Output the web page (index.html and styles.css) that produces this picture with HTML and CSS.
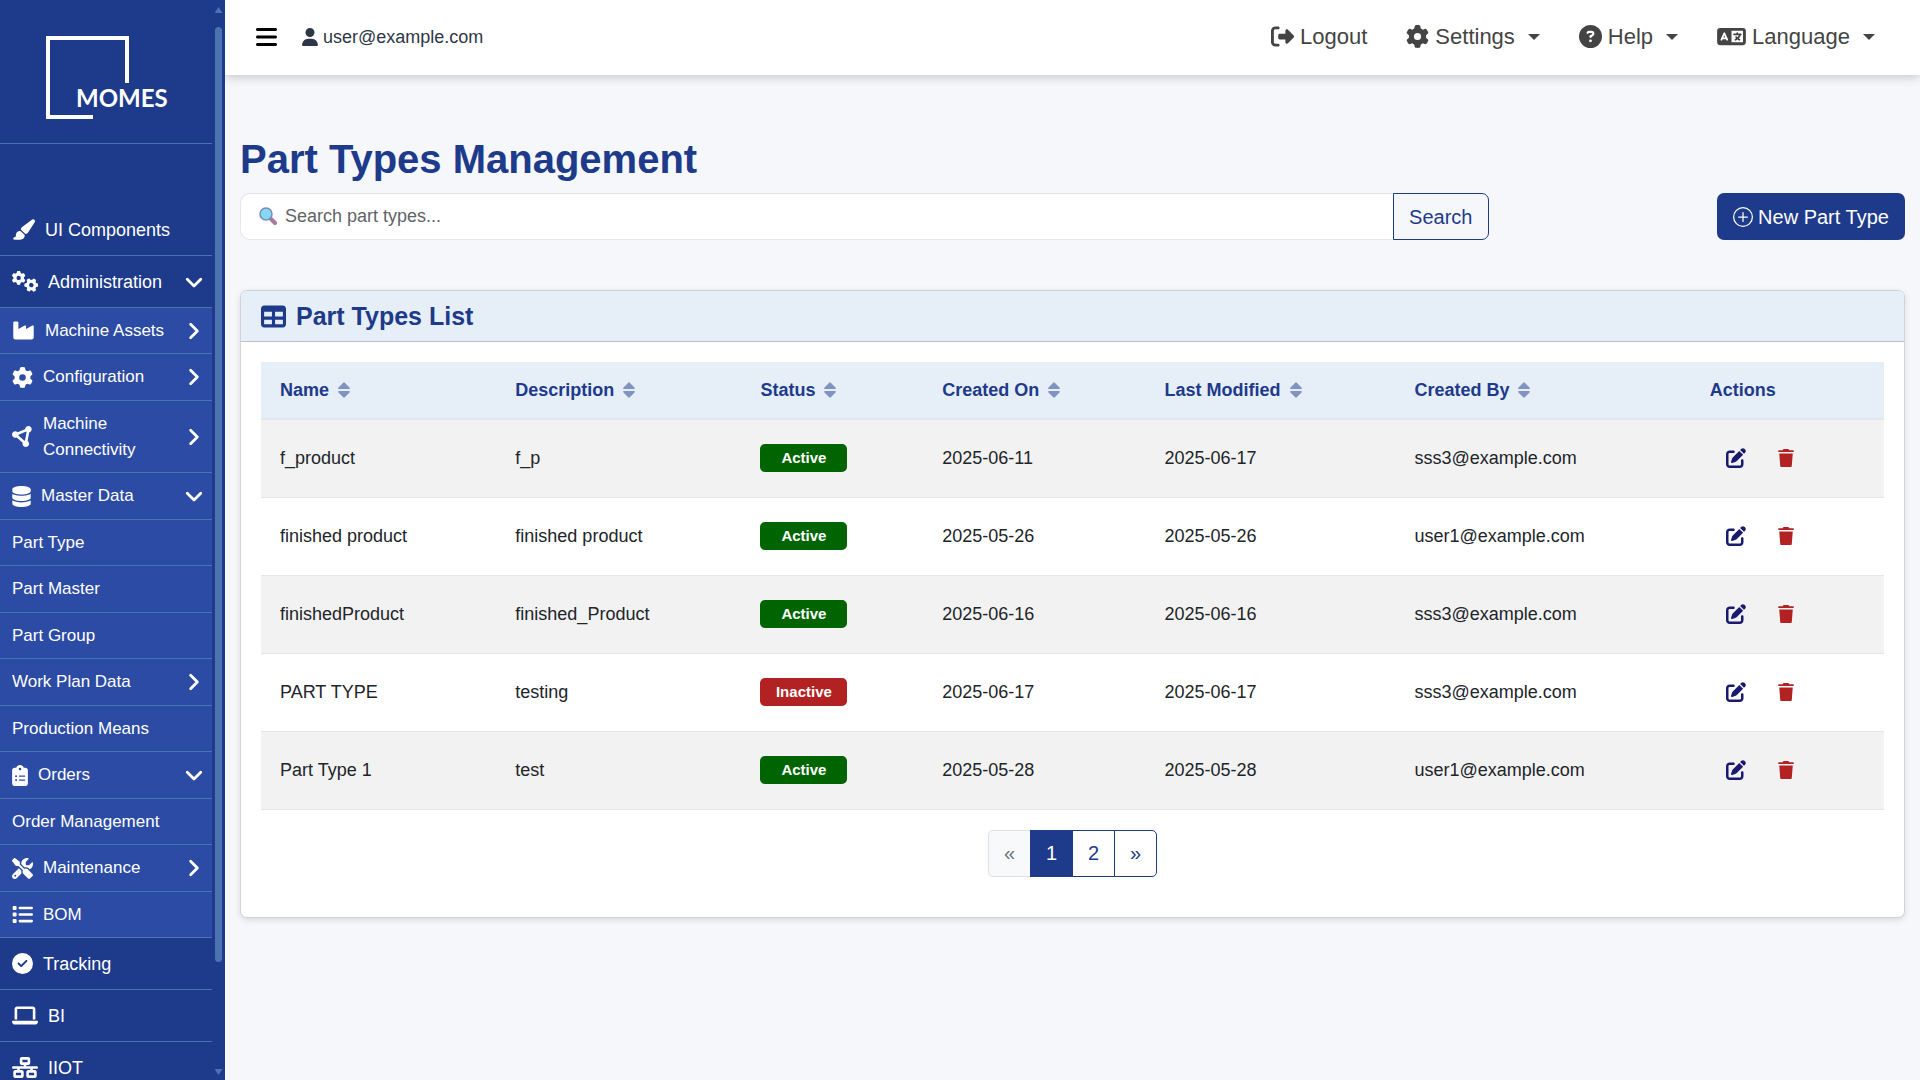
FILE: index.html
```html
<!DOCTYPE html>
<html lang="en">
<head>
<meta charset="utf-8">
<meta name="viewport" content="width=device-width, initial-scale=1">
<title>Part Types Management</title>
<link rel="stylesheet" href="styles.css">
</head>
<body>
<svg class="sprite" aria-hidden="true">
  <symbol id="bars" viewBox="0 0 448 512"><path d="M0 96C0 78.300 14.300 64 32 64H416c17.700 0 32 14.300 32 32s-14.300 32-32 32H32C14.300 128 0 113.700 0 96zM0 256c0-17.700 14.300-32 32-32H416c17.700 0 32 14.300 32 32s-14.300 32-32 32H32c-17.700 0-32-14.300-32-32zM448 416c0 17.700-14.300 32-32 32H32c-17.700 0-32-14.300-32-32s14.300-32 32-32H416c17.700 0 32 14.300 32 32z"/></symbol>
  <symbol id="user" viewBox="0 0 448 512"><path d="M224 256A128 128 0 1 0 224 0a128 128 0 1 0 0 256zm-45.700 48C79.800 304 0 383.800 0 482.300C0 498.700 13.300 512 29.700 512H418.300c16.400 0 29.700-13.300 29.700-29.700C448 383.800 368.200 304 269.700 304H178.300z"/></symbol>
  <symbol id="brush" viewBox="0 0 576 512"><path d="M339.300 367.100c27.300-3.900 51.900-19.400 67.200-42.900L568.200 74.100c12.600-19.500 9.400-45.300-7.600-61.200S517.700-4.400 499.100 9.600L262.400 187.200c-24 18-38.200 46.100-38.400 76.100L339.300 367.100zm-19.600 25.400l-116-104.400C143.900 290.300 96 339.600 96 400c0 3.900 .2 7.800 .6 11.600C98.400 429.100 86.400 448 68.800 448H64c-17.700 0-32 14.300-32 32s14.300 32 32 32H208c61.900 0 112-50.100 112-112c0-2.500-.1-5-.2-7.500z"/></symbol>
  <symbol id="gear" viewBox="0 0 512 512"><path d="M495.900 166.600c3.200 8.700 .5 18.400-6.400 24.600l-43.300 39.400c1.100 8.300 1.700 16.800 1.700 25.400s-.6 17.100-1.700 25.400l43.300 39.400c6.900 6.200 9.600 15.900 6.400 24.600c-4.400 11.900-9.700 23.300-15.800 34.300l-4.700 8.100c-6.600 11-14 21.400-22.100 31.200c-5.900 7.200-15.700 9.600-24.500 6.800l-55.700-17.700c-13.400 10.300-28.200 18.900-44 25.400l-12.500 57.100c-2 9.100-9 16.300-18.200 17.800c-13.800 2.300-28 3.500-42.500 3.500s-28.700-1.200-42.500-3.500c-9.200-1.500-16.200-8.700-18.200-17.800l-12.500-57.100c-15.800-6.500-30.600-15.100-44-25.400L83.100 425.900c-8.800 2.800-18.600 .3-24.500-6.800c-8.100-9.800-15.500-20.200-22.100-31.200l-4.700-8.100c-6.100-11-11.400-22.400-15.800-34.300c-3.200-8.700-.5-18.400 6.400-24.600l43.300-39.400C64.600 273.100 64 264.600 64 256s.6-17.100 1.700-25.400L22.400 191.200c-6.900-6.200-9.600-15.900-6.400-24.600c4.400-11.900 9.700-23.300 15.800-34.300l4.700-8.100c6.600-11 14-21.400 22.100-31.200c5.900-7.200 15.700-9.600 24.500-6.800l55.700 17.700c13.400-10.300 28.200-18.900 44-25.400l12.500-57.100c2-9.100 9-16.300 18.200-17.800C227.300 1.200 241.500 0 256 0s28.700 1.200 42.500 3.500c9.200 1.500 16.200 8.700 18.200 17.800l12.500 57.100c15.800 6.500 30.600 15.100 44 25.400l55.700-17.700c8.800-2.800 18.600-.3 24.500 6.800c8.100 9.800 15.500 20.200 22.100 31.200l4.700 8.100c6.100 11 11.400 22.400 15.800 34.300zM256 336a80 80 0 1 0 0-160 80 80 0 1 0 0 160z"/></symbol>
  <symbol id="gears" viewBox="0 0 640 512"><use href="#gear" x="-8" y="-4" width="344" height="344"/><use href="#gear" x="304" y="172" width="344" height="344" transform="rotate(30 476 344)"/></symbol>
  <symbol id="industry" viewBox="0 0 576 512"><path d="M64 32C46.300 32 32 46.300 32 64V432c0 26.500 21.500 48 48 48H496c26.500 0 48-21.500 48-48V152.200c0-18.200-19.400-29.700-35.400-21.100L352 215.400V152.200c0-18.200-19.400-29.700-35.400-21.100L160 215.400V64c0-17.700-14.300-32-32-32H64z"/></symbol>
  <symbol id="nodes" viewBox="0 0 512 512"><path d="M418.400 157.900c35.300-8.300 61.600-40 61.600-77.900c0-44.200-35.800-80-80-80c-43.400 0-78.700 34.500-80 77.500L136.200 151.100C121.700 136.800 101.900 128 80 128c-44.200 0-80 35.800-80 80s35.800 80 80 80c12.200 0 23.800-2.700 34.100-7.600L259.700 407.800c-2.400 7.600-3.700 15.800-3.700 24.200c0 44.200 35.800 80 80 80s80-35.800 80-80c0-27.700-14-52.100-35.400-66.400l37.800-207.700zM156.300 232.200c2.200-6.900 3.500-14.200 3.700-21.700l183.800-73.500c3.600 3.500 7.400 6.700 11.600 9.500L317.600 354.100c-5.500 1.300-10.800 3.100-15.800 5.500L156.300 232.200z"/></symbol>
  <symbol id="database" viewBox="0 0 448 512"><path d="M448 80v48c0 44.200-100.300 80-224 80S0 172.200 0 128V80C0 35.800 100.300 0 224 0S448 35.800 448 80zM393.200 214.700c20.800-7.400 39.900-16.900 54.800-28.600V288c0 44.200-100.300 80-224 80S0 332.200 0 288V186.100c14.900 11.800 34 21.200 54.800 28.600C99.700 230.700 159.500 240 224 240s124.300-9.300 169.200-25.300zM0 346.100c14.900 11.800 34 21.200 54.800 28.600C99.700 390.700 159.500 400 224 400s124.300-9.300 169.200-25.300c20.800-7.400 39.900-16.900 54.800-28.600V432c0 44.200-100.300 80-224 80S0 476.200 0 432V346.100z"/></symbol>
  <symbol id="clipboard" viewBox="0 0 384 512"><path d="M192 0c-41.800 0-77.400 26.700-90.500 64H64C28.700 64 0 92.700 0 128V448c0 35.300 28.700 64 64 64H320c35.300 0 64-28.700 64-64V128c0-35.300-28.700-64-64-64H282.500C269.400 26.700 233.800 0 192 0zm0 64a32 32 0 1 1 0 64 32 32 0 1 1 0-64zM72 272a24 24 0 1 1 48 0 24 24 0 1 1 -48 0zm104-16H304c8.800 0 16 7.200 16 16s-7.200 16-16 16H176c-8.800 0-16-7.200-16-16s7.200-16 16-16zM72 368a24 24 0 1 1 48 0 24 24 0 1 1 -48 0zm88 0c0-8.800 7.200-16 16-16H304c8.800 0 16 7.200 16 16s-7.200 16-16 16H176c-8.800 0-16-7.200-16-16z"/></symbol>
  <symbol id="tools" viewBox="0 0 512 512"><path d="M78.600 5C69.100-2.400 55.600-1.500 47 7L7 47c-8.500 8.500-9.400 22-2.100 31.600l80 104c4.500 5.900 11.600 9.400 19 9.400h54.100l109 109c-14.700 29-10 65.400 14.300 89.600l112 112c12.500 12.500 32.800 12.500 45.300 0l64-64c12.500-12.500 12.500-32.800 0-45.300l-112-112c-24.200-24.200-60.600-29-89.600-14.300l-109-109V104c0-7.500-3.500-14.500-9.400-19L78.600 5zM19.900 396.100C7.200 408.800 0 426.100 0 444.100C0 481.600 30.400 512 67.900 512c18 0 35.300-7.200 48-19.900L233.700 374.300c-7.800-20.900-9-43.600-3.600-65.100l-61.700-61.700L19.900 396.100zM512 144c0-10.500-1.100-20.700-3.200-30.500c-2.400-11.200-16.100-14.100-24.200-6l-63.900 63.900c-3 3-7.100 4.700-11.300 4.700H352c-8.800 0-16-7.200-16-16V102.600c0-4.200 1.700-8.300 4.700-11.300l63.900-63.900c8.100-8.100 5.200-21.800-6-24.200C388.700 1.100 378.500 0 368 0C288.500 0 224 64.500 224 144l0 .8 85.300 85.300c36-9.100 75.800 .5 104 28.700L429 274.500c49-23 83-72.800 83-130.500zM56 432a24 24 0 1 1 48 0 24 24 0 1 1 -48 0z"/></symbol>
  <symbol id="list" viewBox="0 0 512 512"><rect x="16" y="48" width="96" height="96" rx="24"/><rect x="16" y="208" width="96" height="96" rx="24"/><rect x="16" y="368" width="96" height="96" rx="24"/><rect x="160" y="64" width="352" height="64" rx="32"/><rect x="160" y="224" width="352" height="64" rx="32"/><rect x="160" y="384" width="352" height="64" rx="32"/></symbol>
  <symbol id="check" viewBox="0 0 512 512"><path d="M256 512A256 256 0 1 0 256 0a256 256 0 1 0 0 512zM369 209L241 337c-9.400 9.400-24.600 9.400-33.900 0l-64-64c-9.400-9.400-9.400-24.600 0-33.900s24.600-9.400 33.900 0l47 47L335 175c9.400-9.400 24.600-9.400 33.900 0s9.400 24.600 0 33.900z"/></symbol>
  <symbol id="laptop" viewBox="0 0 640 512"><path d="M128 32C92.700 32 64 60.700 64 96V352h64V96H512V352h64V96c0-35.300-28.700-64-64-64H128zM19.200 384C8.600 384 0 392.600 0 403.200C0 445.600 34.400 480 76.800 480H563.200c42.400 0 76.800-34.400 76.800-76.800c0-10.600-8.600-19.200-19.200-19.200H19.200z"/></symbol>
  <symbol id="network" viewBox="0 0 640 512"><path d="M256 64H384v64H256V64zM240 0c-26.500 0-48 21.500-48 48v96c0 26.500 21.500 48 48 48h48v32H32c-17.700 0-32 14.300-32 32s14.300 32 32 32h96v32H80c-26.500 0-48 21.500-48 48v96c0 26.500 21.500 48 48 48H240c26.500 0 48-21.500 48-48V368c0-26.500-21.500-48-48-48H192V288H448v32H400c-26.500 0-48 21.500-48 48v96c0 26.500 21.500 48 48 48H560c26.500 0 48-21.500 48-48V368c0-26.500-21.500-48-48-48H512V288h96c17.700 0 32-14.300 32-32s-14.300-32-32-32H352V192h48c26.500 0 48-21.500 48-48V48c0-26.500-21.500-48-48-48H240zM96 448V384H224v64H96zm320-64H544v64H416V384z"/></symbol>
  <symbol id="down" viewBox="0 0 16 16"><path d="M2 5.500l6 6 6-6" fill="none" stroke="currentColor" stroke-width="2.500" stroke-linecap="round" stroke-linejoin="round"/></symbol>
  <symbol id="right" viewBox="0 0 16 16"><path d="M5 2l6 6-6 6" fill="none" stroke="currentColor" stroke-width="2.500" stroke-linecap="round" stroke-linejoin="round"/></symbol>
  <symbol id="logout" viewBox="0 0 512 512"><path d="M377.900 105.900L500.700 228.700c7.200 7.200 11.300 17.100 11.300 27.300s-4.100 20.100-11.300 27.300L377.900 406.100c-6.400 6.400-15 9.900-24 9.900c-18.700 0-33.900-15.200-33.900-33.900l0-62.100-128 0c-17.700 0-32-14.300-32-32l0-64c0-17.700 14.300-32 32-32l128 0 0-62.100c0-18.700 15.200-33.900 33.900-33.900c9 0 17.600 3.600 24 9.900zM160 96L96 96c-17.700 0-32 14.300-32 32l0 256c0 17.700 14.300 32 32 32l64 0c17.700 0 32 14.300 32 32s-14.300 32-32 32l-64 0c-53 0-96-43-96-96L0 128C0 75 43 32 96 32l64 0c17.700 0 32 14.300 32 32s-14.300 32-32 32z"/></symbol>
  <symbol id="question" viewBox="0 0 512 512"><path d="M256 512A256 256 0 1 0 256 0a256 256 0 1 0 0 512zM169.800 165.300c7.900-22.300 29.100-37.300 52.800-37.300h58.300c34.900 0 63.100 28.300 63.100 63.100c0 22.600-12.100 43.500-31.700 54.800L280 264.400c-.2 13-10.900 23.600-24 23.600c-13.300 0-24-10.700-24-24V250.500c0-8.600 4.600-16.500 12.100-20.800l44.300-25.400c4.700-2.700 7.600-7.700 7.600-13.100c0-8.400-6.800-15.100-15.100-15.100H222.600c-3.400 0-6.400 2.100-7.500 5.300l-.4 1.200c-4.400 12.500-18.200 19-30.600 14.600s-19-18.200-14.600-30.600l.4-1.200zM224 352a32 32 0 1 1 64 0 32 32 0 1 1 -64 0z"/></symbol>
  <symbol id="language" viewBox="0 0 640 512"><path d="M0 128C0 92.700 28.700 64 64 64H576c35.300 0 64 28.700 64 64V384c0 35.300-28.700 64-64 64H64c-35.300 0-64-28.700-64-64V128zm320 0V384H576V128H320zM178.300 175.900c-3.200-7.200-10.400-11.900-18.300-11.900s-15.100 4.700-18.300 11.900l-64 144c-4.500 10.100 .1 21.900 10.200 26.400s21.900-.1 26.400-10.200l8.900-20.100h73.600l8.900 20.100c4.500 10.100 16.300 14.600 26.400 10.200s14.600-16.300 10.200-26.400l-64-144zM160 233.200L179 276H141l19-42.800zM448 164c11 0 20 9 20 20v4h44 16c11 0 20 9 20 20s-9 20-20 20h-2l-1.600 4.500c-8.900 24.400-22.400 46.600-39.600 65.400c.9 .6 1.800 1.100 2.700 1.600l18.900 11.300c9.500 5.700 12.500 18 6.900 27.400s-18 12.500-27.400 6.900l-18.900-11.300c-4.500-2.700-8.800-5.500-13.100-8.500c-10.600 7.500-21.900 14-34 19.400l-3.600 1.600c-10.100 4.500-21.900-.1-26.400-10.200s.1-21.900 10.200-26.400l3.600-1.600c6.400-2.900 12.600-6.100 18.500-9.800l-12.200-12.200c-7.800-7.800-7.800-20.500 0-28.300s20.500-7.800 28.300 0l14.600 14.600 .5 .5c12.400-13.100 22.500-28.300 29.800-45H448 376c-11 0-20-9-20-20s9-20 20-20h52v-4c0-11 9-20 20-20z"/></symbol>
  <symbol id="edit" viewBox="0 0 512 512"><path d="M471.600 21.700c-21.900-21.900-57.300-21.900-79.200 0L362.300 51.700l97.900 97.900 30.100-30.100c21.900-21.900 21.900-57.300 0-79.200L471.600 21.700zm-299.200 220c-6.100 6.100-10.800 13.600-13.500 21.900l-29.600 88.800c-2.900 8.600-.6 18.100 5.800 24.600s15.900 8.700 24.600 5.800l88.800-29.600c8.200-2.700 15.700-7.400 21.900-13.500L437.700 172.300 339.700 74.300 172.400 241.700zM96 64C43 64 0 107 0 160V416c0 53 43 96 96 96H352c53 0 96-43 96-96V320c0-17.700-14.300-32-32-32s-32 14.300-32 32v96c0 17.700-14.300 32-32 32H96c-17.700 0-32-14.300-32-32V160c0-17.700 14.300-32 32-32h96c17.700 0 32-14.300 32-32s-14.300-32-32-32H96z"/></symbol>
  <symbol id="trash" viewBox="0 0 448 512"><path d="M135 18C141 7 152 0 164 0H284c12 0 23 7 29 18L320 32h104c14 0 24 12 24 28s-10 28-24 28H24C10 88 0 76 0 60S10 32 24 32h104zM32 128H416L388 488c-1 14-12 24-26 24H86c-14 0-25-10-26-24z"/></symbol>
  <symbol id="table" viewBox="0 0 512 512"><path d="M64 256V160H224v96H64zm0 64H224v96H64V320zm224 96V320H448v96H288zM448 256H288V160H448v96zM64 32C28.700 32 0 60.700 0 96V416c0 35.300 28.700 64 64 64H448c35.300 0 64-28.700 64-64V96c0-35.300-28.700-64-64-64H64z"/></symbol>
  <symbol id="plus" viewBox="0 0 16 16"><path d="M8 15A7 7 0 1 1 8 1a7 7 0 0 1 0 14m0 1A8 8 0 1 0 8 0a8 8 0 0 0 0 16M8 4a.5.500 0 0 1 .5.500v3h3a.5.500 0 0 1 0 1h-3v3a.5.500 0 0 1-1 0v-3h-3a.5.500 0 0 1 0-1h3v-3A.5.500 0 0 1 8 4"/></symbol>
  <symbol id="sort" viewBox="0 0 12 16"><path d="M5 1Q6-.5 7 1L11.500 5.500Q12.400 7 11 7H1Q-.4 7 .5 5.500zM5 15Q6 16.500 7 15L11.500 10.500Q12.400 9 11 9H1Q-.4 9 .5 10.500z"/></symbol>
</svg>

<div class="app">
  <aside class="sidebar">
    <nav class="nav" aria-label="Main">
      <a class="brand" href="#" aria-label="Home">
        <svg class="logo" viewBox="0 0 122 84"><path d="M81 47V2H2V81H47" fill="none" stroke="#fff" stroke-width="4"/><text class="logo-text" x="30" y="71">MOMES</text></svg>
      </a>
      <ul class="menu">
        <li><a class="item" href="#"><svg class="icon wide"><use href="#brush"/></svg><span>UI Components</span></a></li>
        <li><a class="item" href="#"><svg class="icon wider"><use href="#gears"/></svg><span>Administration</span><svg class="chevron"><use href="#down"/></svg></a>
          <ul class="submenu">
            <li><a class="item" href="#"><svg class="icon wide"><use href="#industry"/></svg><span>Machine Assets</span><svg class="chevron"><use href="#right"/></svg></a></li>
            <li><a class="item" href="#"><svg class="icon"><use href="#gear"/></svg><span>Configuration</span><svg class="chevron"><use href="#right"/></svg></a></li>
            <li class="two-line"><a class="item" href="#"><svg class="icon"><use href="#nodes"/></svg><span>Machine Connectivity</span><svg class="chevron"><use href="#right"/></svg></a></li>
            <li><a class="item" href="#"><svg class="icon narrow"><use href="#database"/></svg><span>Master Data</span><svg class="chevron"><use href="#down"/></svg></a></li>
            <li><a class="item" href="#"><span>Part Type</span></a></li>
            <li><a class="item" href="#"><span>Part Master</span></a></li>
            <li><a class="item" href="#"><span>Part Group</span></a></li>
            <li><a class="item" href="#"><span>Work Plan Data</span><svg class="chevron"><use href="#right"/></svg></a></li>
            <li><a class="item" href="#"><span>Production Means</span></a></li>
            <li><a class="item" href="#"><svg class="icon slim"><use href="#clipboard"/></svg><span>Orders</span><svg class="chevron"><use href="#down"/></svg></a></li>
            <li><a class="item" href="#"><span>Order Management</span></a></li>
            <li><a class="item" href="#"><svg class="icon"><use href="#tools"/></svg><span>Maintenance</span><svg class="chevron"><use href="#right"/></svg></a></li>
            <li><a class="item" href="#"><svg class="icon"><use href="#list"/></svg><span>BOM</span></a></li>
          </ul>
        </li>
        <li><a class="item" href="#"><svg class="icon"><use href="#check"/></svg><span>Tracking</span></a></li>
        <li><a class="item" href="#"><svg class="icon wider"><use href="#laptop"/></svg><span>BI</span></a></li>
        <li><a class="item" href="#"><svg class="icon wider"><use href="#network"/></svg><span>IIOT</span></a></li>
      </ul>
    </nav>
    <div class="scrollbar" aria-hidden="true"><i class="arrow up"></i><i class="track"><i class="thumb"></i></i><i class="arrow down"></i></div>
  </aside>

  <div class="page">
    <header class="topbar">
      <button class="toggle" type="button" aria-label="Toggle menu"><svg><use href="#bars"/></svg></button>
      <span class="account"><svg><use href="#user"/></svg>user@example.com</span>
      <nav class="tools" aria-label="Account">
        <a href="#"><svg><use href="#logout"/></svg>Logout</a>
        <a href="#"><svg><use href="#gear"/></svg>Settings<i class="caret"></i></a>
        <a href="#"><svg><use href="#question"/></svg>Help<i class="caret"></i></a>
        <a href="#"><svg class="language"><use href="#language"/></svg>Language<i class="caret"></i></a>
      </nav>
    </header>

    <main class="content">
      <h1>Part Types Management</h1>
      <div class="actions-bar">
        <form class="search" role="search">
          <label class="field">
            <svg viewBox="0 0 18 18"><path d="M11 11l5 5" stroke="#a9789f" stroke-width="4" stroke-linecap="round"/><circle cx="7" cy="7" r="6" fill="#84d8f2" stroke="#7b8db5" stroke-width="1.500"/></svg>
            <input type="search" placeholder="Search part types..." aria-label="Search part types">
          </label>
          <button type="button">Search</button>
        </form>
        <button class="new" type="button"><svg><use href="#plus"/></svg>New Part Type</button>
      </div>

      <section class="card">
        <h2><svg><use href="#table"/></svg>Part Types List</h2>
        <div class="card-body">
          <table>
            <colgroup><col class="c-name"><col class="c-desc"><col class="c-status"><col class="c-created"><col class="c-modified"><col class="c-by"><col></colgroup>
            <thead><tr>
              <th>Name<svg><use href="#sort"/></svg></th><th>Description<svg><use href="#sort"/></svg></th><th>Status<svg><use href="#sort"/></svg></th><th>Created On<svg><use href="#sort"/></svg></th><th>Last Modified<svg><use href="#sort"/></svg></th><th>Created By<svg><use href="#sort"/></svg></th><th>Actions</th>
            </tr></thead>
            <tbody>
              <tr><td>f_product</td><td>f_p</td><td><span class="badge">Active</span></td><td>2025-06-11</td><td>2025-06-17</td><td>sss3@example.com</td><td><div class="row-actions"><button class="edit" type="button" aria-label="Edit"><svg><use href="#edit"/></svg></button><button class="delete" type="button" aria-label="Delete"><svg><use href="#trash"/></svg></button></div></td></tr>
              <tr><td>finished product</td><td>finished product</td><td><span class="badge">Active</span></td><td>2025-05-26</td><td>2025-05-26</td><td>user1@example.com</td><td><div class="row-actions"><button class="edit" type="button" aria-label="Edit"><svg><use href="#edit"/></svg></button><button class="delete" type="button" aria-label="Delete"><svg><use href="#trash"/></svg></button></div></td></tr>
              <tr><td>finishedProduct</td><td>finished_Product</td><td><span class="badge">Active</span></td><td>2025-06-16</td><td>2025-06-16</td><td>sss3@example.com</td><td><div class="row-actions"><button class="edit" type="button" aria-label="Edit"><svg><use href="#edit"/></svg></button><button class="delete" type="button" aria-label="Delete"><svg><use href="#trash"/></svg></button></div></td></tr>
              <tr><td>PART TYPE</td><td>testing</td><td><span class="badge inactive">Inactive</span></td><td>2025-06-17</td><td>2025-06-17</td><td>sss3@example.com</td><td><div class="row-actions"><button class="edit" type="button" aria-label="Edit"><svg><use href="#edit"/></svg></button><button class="delete" type="button" aria-label="Delete"><svg><use href="#trash"/></svg></button></div></td></tr>
              <tr><td>Part Type 1</td><td>test</td><td><span class="badge">Active</span></td><td>2025-05-28</td><td>2025-05-28</td><td>user1@example.com</td><td><div class="row-actions"><button class="edit" type="button" aria-label="Edit"><svg><use href="#edit"/></svg></button><button class="delete" type="button" aria-label="Delete"><svg><use href="#trash"/></svg></button></div></td></tr>
            </tbody>
          </table>
          <nav class="pagination" aria-label="Pages">
            <button type="button" disabled>«</button><button class="current" type="button">1</button><button type="button">2</button><button type="button">»</button>
          </nav>
        </div>
      </section>
    </main>
  </div>
</div>
</body>
</html>
```
FILE: styles.css
```css
* { box-sizing: border-box; }

body {
  margin: 0;
  background: #f5f7fb;
  color: #212529;
  font-family: "Liberation Sans", Arial, sans-serif;
  font-size: 18px;
  line-height: 26px;
}

a { color: inherit; text-decoration: none; }
button, input { font: inherit; }
button { cursor: pointer; }
svg { fill: currentColor; flex: none; }
ul { list-style: none; margin: 0; padding: 0; }
.sprite { position: absolute; width: 0; height: 0; }

.app { display: flex; height: 100vh; overflow: hidden; }

/* Sidebar */
.sidebar { display: flex; flex: none; width: 225px; background: #1e3a8a; color: #fff; }
.nav { flex: 1; overflow: hidden; }
.brand { display: block; height: 144px; padding: 36px 44px 0 46px; border-bottom: 1px solid #4a73b0; }
.logo { display: block; width: 122px; height: 84px; }
.logo-text { fill: #fff; font: bold 24px Lato, sans-serif; }
.menu { padding-top: 60px; }
.item {
  display: flex;
  align-items: center;
  gap: 10px;
  height: 52px;
  padding: 0 9px 0 12px;
  border-bottom: 1px solid #4a73b0;
}
.submenu { background: #2c4ba4; }
.submenu .item { height: 46px; font-size: 17px; }
.submenu li:nth-child(even) .item { height: 47px; }
.submenu .two-line .item { height: 72px; }
.icon { width: 21px; height: 21px; }
.icon.wide { width: 23px; }
.icon.wider { width: 26px; }
.icon.narrow { width: 19px; }
.icon.slim { width: 16px; }
.chevron { width: 18px; height: 18px; margin-left: auto; }

.scrollbar { display: flex; flex: none; flex-direction: column; align-items: center; width: 13px; padding: 7px 0 5px; }
.arrow { width: 8px; height: 6px; background: #4a73b0; }
.arrow.up { clip-path: polygon(50% 0, 100% 100%, 0 100%); }
.arrow.down { clip-path: polygon(0 0, 100% 0, 50% 100%); }
.track { flex: 1; width: 7px; padding: 14px 0; }
.thumb { display: block; height: 91%; border-radius: 4px; background: #4a73b0; }

/* Top bar */
.page { flex: 1; min-width: 0; overflow: hidden; }
.topbar {
  display: flex;
  align-items: center;
  height: 75px;
  padding: 0 45px 2px 31px;
  background: #fff;
  box-shadow: 0 2px 10px rgba(0, 0, 0, .2);
}
.toggle { display: flex; padding: 0; border: 0; background: none; color: #000; }
.toggle svg { width: 21px; height: 24px; }
.account { display: flex; align-items: center; gap: 5px; margin-left: 25px; color: #2d3748; }
.account svg { width: 16px; height: 18px; }
.tools { display: flex; gap: 39px; margin-left: auto; color: #444; font-size: 22px; }
.tools a { display: flex; align-items: center; gap: 6px; }
.tools svg { width: 23px; height: 23px; }
.tools .language { width: 29px; }
.caret { margin-left: 7px; border: 6px solid transparent; border-top-color: currentColor; border-bottom: 0; }

/* Content */
.content { padding: 60px 15px 24px; }
h1 { margin: 0 0 10px; color: #1e3a8a; font-size: 40px; line-height: 48px; }
.actions-bar { display: flex; justify-content: space-between; margin-bottom: 50px; }
.search { display: flex; width: 75%; }
.field {
  display: flex;
  flex: 1;
  align-items: center;
  gap: 8px;
  height: 47px;
  padding: 0 18px 2px;
  border: 1px solid #e3e6ea;
  border-right: 0;
  border-radius: 10px 0 0 10px;
  background: #fff;
}
.field svg { width: 18px; height: 18px; }
.field input { flex: 1; min-width: 0; padding: 0; border: 0; outline: 0; background: none; }
.field input::placeholder { color: #5f6368; opacity: 1; }
.search button {
  width: 96px;
  border: 1px solid #1e3a8a;
  border-radius: 0 7px 7px 0;
  background: none;
  color: #1e3a8a;
  font-size: 20px;
}
.new {
  display: flex;
  align-items: center;
  justify-content: center;
  gap: 5px;
  width: 188px;
  height: 47px;
  padding: 0;
  border: 0;
  border-radius: 7px;
  background: #1e3a8a;
  color: #fff;
  font-size: 20px;
}
.new svg { width: 20px; height: 20px; }

.card {
  overflow: hidden;
  border: 1px solid #d0d3d8;
  border-radius: 7px;
  background: #fff;
  box-shadow: 0 2px 6px rgba(0, 0, 0, .12);
}
h2 {
  display: flex;
  align-items: center;
  gap: 10px;
  height: 51px;
  margin: 0;
  padding: 0 20px;
  border-bottom: 1px solid #b9c1ce;
  background: #e6eef8;
  color: #1e3a8a;
  font-size: 25px;
}
h2 svg { width: 25px; height: 25px; }
.card-body { padding: 20px 20px 40px; }

table { width: 100%; border-collapse: collapse; table-layout: fixed; }
.c-name { width: 14.5%; }
.c-desc { width: 15.1%; }
.c-status { width: 11.2%; }
.c-created { width: 13.7%; }
.c-modified { width: 15.4%; }
.c-by { width: 18.2%; }
th, td { padding: 0 19px; text-align: left; white-space: nowrap; }
th { height: 57px; border-bottom: 2px solid #e3e6ea; background: #e6eef8; color: #1e3a8a; }
th svg { width: 12px; height: 16px; margin-left: 9px; opacity: .5; vertical-align: -2px; }
td { height: 78px; border-bottom: 1px solid #e3e6ea; }
tbody tr:nth-child(odd) { background: #f2f2f2; }
.badge {
  display: inline-block;
  width: 87px;
  border-radius: 5px;
  background: #006400;
  color: #fff;
  font-size: 15px;
  font-weight: bold;
  line-height: 28px;
  text-align: center;
}
.badge.inactive { background: #b22222; }
.row-actions { display: flex; align-items: center; gap: 32px; padding-left: 16px; }
.row-actions button { display: flex; padding: 0; border: 0; background: none; }
.edit { color: #191970; }
.delete { color: #b22222; }
.row-actions .edit svg { width: 20px; height: 20px; }
.row-actions .delete svg { width: 16px; height: 18px; }

.pagination { display: flex; justify-content: center; margin-top: 20px; }
.pagination button {
  width: 43px;
  height: 47px;
  margin-left: -1px;
  padding: 0;
  border: 1px solid #1e3a8a;
  background: #fff;
  color: #1e3a8a;
  font-size: 20px;
}
.pagination button:first-child { margin-left: 0; border-radius: 5px 0 0 5px; }
.pagination button:last-child { border-radius: 0 5px 5px 0; }
.pagination button:disabled { border-color: #dee2e6; background: #f8f9fa; color: #6c757d; }
.pagination .current { background: #1e3a8a; color: #fff; }
```
